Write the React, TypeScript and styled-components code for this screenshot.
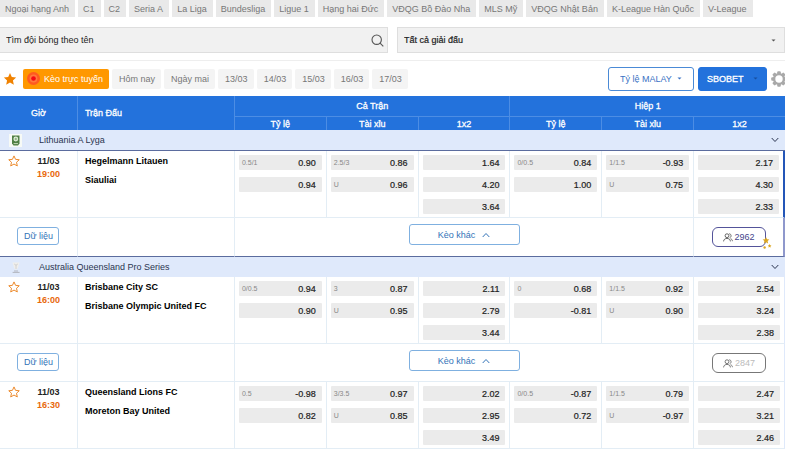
import React from "react";
import styled, { createGlobalStyle } from "styled-components";

const GlobalStyle = createGlobalStyle`
  *, *::before, *::after { box-sizing: border-box; }
  body {
    margin: 0;
    background: #fff;
    color: #222;
    font: 9px/12px "Liberation Sans", Arial, sans-serif;
  }
  button, input, select { font: inherit; color: inherit; margin: 0; }
  button, select { cursor: pointer; }
`;

const Page = styled.main`
  display: flex;
  flex-direction: column;
  overflow: hidden;
`;

const LeagueTabs = styled.nav`
  display: flex;
  gap: 3px;
  overflow: hidden;
`;

const LeagueTab = styled.button`
  flex: none;
  height: 17px;
  padding: 0 6px 0 5px;
  border: 0;
  background: #e9e9e9;
  color: #777;
`;

const SearchBar = styled.div`
  display: grid;
  grid-template-columns: 1fr 1fr;
  gap: 9px;
  padding: 10px 0 7px;
  border-bottom: 1px solid #eee;
`;

const Field = styled.label<{ $flush?: boolean }>`
  display: flex;
  align-items: center;
  height: 26px;
  padding: 0 ${(p) => (p.$flush ? "3px" : "8px")} 0 6px;
  background: #f1f1f1;
  border: 1px solid #dedede;
  border-left-width: ${(p) => (p.$flush ? 0 : "1px")};
  -webkit-text-stroke: ${(p) => (p.$flush ? 0 : "0.2px #222")};
`;

const SearchInput = styled.input`
  flex: 1;
  min-width: 0;
  padding: 0;
  border: 0;
  outline: 0;
  background: none;
  &::placeholder { color: #222; opacity: 1; }
`;

const BareSelect = styled.select`
  flex: 1;
  min-width: 0;
  padding: 0;
  border: 0;
  outline: 0;
  background: none;
  appearance: none;
`;

const FilterBar = styled.div`
  display: flex;
  align-items: center;
  gap: 3px;
  height: 35px;
  padding-left: 3px;
`;

const IconButton = styled.button`
  display: flex;
  flex: none;
  padding: 0;
  border: 0;
  background: none;
`;

const LiveButton = styled.button`
  display: flex;
  flex: none;
  align-items: center;
  gap: 4px;
  height: 20px;
  margin-left: 3px;
  padding: 0 6px 0 4px;
  border: 0;
  border-radius: 2px;
  background: #ff9800;
  color: #fff;
`;

const DayChip = styled.button`
  flex: none;
  height: 20px;
  padding: 0 6px 0 7px;
  border: 0;
  border-radius: 2px;
  background: #f4f4f4;
  color: #777;
`;

const FilterActions = styled.div`
  display: flex;
  flex: none;
  align-items: center;
  gap: 4px;
  margin: 0 -2px 0 auto;
`;

const PillSelect = styled.label<{ $solid?: boolean }>`
  display: flex;
  align-items: center;
  gap: ${(p) => (p.$solid ? "9px" : "5px")};
  height: 24px;
  padding: 0 ${(p) => (p.$solid ? "8px" : "11px")};
  border: 1px solid ${(p) => (p.$solid ? "#2372dc" : "#4a8ad6")};
  border-radius: 3px;
  background: ${(p) => (p.$solid ? "#2372dc" : "#fff")};
  color: ${(p) => (p.$solid ? "#fff" : "#3a72c4")};
  -webkit-text-stroke: ${(p) => (p.$solid ? "0.3px #fff" : 0)};
`;

const OddsTable = styled.table`
  width: 100%;
  table-layout: fixed;
  border-collapse: separate;
  border-spacing: 0;
`;

const TimeCol = styled.col`width: 9.8%;`;
const MatchCol = styled.col`width: 20%;`;

const Th = styled.th<{ $left?: boolean; $sub?: boolean }>`
  height: ${(p) => (p.$sub ? "13px" : "21px")};
  padding: ${(p) => (p.$left ? "0 7px" : "0")};
  border-left: 1px solid #4c8de4;
  border-bottom: ${(p) => (p.$sub ? 0 : "1px solid #4c8de4")};
  background: #2372dc;
  color: #fff;
  font-weight: 400;
  -webkit-text-stroke: 0.3px #fff;
  text-align: ${(p) => (p.$left ? "left" : "center")};
  &:first-child { border-left: ${(p) => (p.$sub ? "1px solid #4c8de4" : 0)}; }
  &[rowspan] { border-bottom: 0; }
`;

const LeagueCell = styled.td<{ $lined?: boolean }>`
  height: ${(p) => (p.$lined ? "21px" : "20px")};
  padding: 0 6px 0 9px;
  background: #dfe9fb;
  border-bottom: ${(p) => (p.$lined ? "1px solid #5b6c9e" : 0)};
`;

const LeagueLine = styled.div`
  display: flex;
  align-items: center;
  color: #2b3550;
  span { flex: 1; margin-left: 17px; }
`;

const Cell = styled.td<{ $edge?: string }>`
  height: 67px;
  padding: 4px 4px 3px;
  vertical-align: top;
  border-left: 1px solid #e3edf5;
  border-bottom: 1px solid #e3edf5;
  &:first-child { border-left: 0; }
  &:last-child { border-right: ${(p) => p.$edge ?? "1px solid #dfe9fb"}; }
`;

const FootCell = styled.td<{ $tight?: boolean; $active?: boolean }>`
  height: ${(p) => (p.$active ? "39px" : "38px")};
  padding: ${(p) => (p.$tight ? "6px" : "9px")} 0 0;
  vertical-align: top;
  text-align: center;
  border-left: 1px solid #e3edf5;
  border-bottom: 1px solid ${(p) => (p.$active ? "#5b6c9e" : "#e3edf5")};
  &:first-child { border-left: 0; }
  &:last-child { border-right: ${(p) => (p.$active ? "2px solid #8f98cc" : "1px solid #dfe9fb")}; }
`;

const Kickoff = styled.div`
  display: grid;
  grid-template-columns: 12px 1fr;
  gap: 4px;
  padding-left: 4px;
`;

const KickoffTimes = styled.div`
  text-align: center;
  font-weight: 700;
  line-height: 13px;
  time { display: block; }
  time + time { color: #e8690b; }
`;

const Teams = styled.div`
  padding-left: 3px;
  color: #000;
  font-weight: 700;
  line-height: 19px;
  margin-top: -3px;
`;

const OddsStack = styled.div`
  display: flex;
  flex-direction: column;
  gap: 7px;
`;

const Odd = styled.button`
  display: flex;
  align-items: center;
  justify-content: space-between;
  width: 100%;
  height: 15px;
  padding: 0 6px 0 3px;
  border: 0;
  border-radius: 1px;
  background: #ebebeb;
  color: #222;
  small { font-size: 7px; color: #888; }
  strong { margin-left: auto; font-weight: 400; -webkit-text-stroke: 0.2px #222; }
`;

const OutlineButton = styled.button<{ $wide?: boolean }>`
  display: inline-flex;
  align-items: center;
  justify-content: center;
  gap: 7px;
  width: ${(p) => (p.$wide ? "111px" : "42px")};
  height: ${(p) => (p.$wide ? "21px" : "18px")};
  padding: 0;
  border: 1px solid #7fb0e0;
  border-radius: 3px;
  background: #fff;
  color: #3474b8;
`;

const ViewersButton = styled.button<{ $muted?: boolean }>`
  position: relative;
  display: inline-flex;
  align-items: center;
  justify-content: center;
  gap: 2px;
  width: 54px;
  height: 20px;
  padding: 0;
  border: 1px solid ${(p) => (p.$muted ? "#777" : "#54549a")};
  border-radius: 6px;
  background: #fff;
  color: ${(p) => (p.$muted ? "#bbb" : "#45458c")};
`;

const Sparkle = styled.svg`
  position: absolute;
  right: -7px;
  bottom: -3px;
`;

const starPath = "M12 1.8l3.1 6.9 7.4.8-5.5 5 1.6 7.4L12 18.1l-6.6 3.8L7 14.5l-5.5-5 7.4-.8z";

const Star = ({ filled }: { filled?: boolean }) => (
  <svg width={filled ? 14 : 12} height={filled ? 14 : 12} viewBox="0 0 24 24" aria-hidden="true">
    <path d={starPath} fill={filled ? "#f08200" : "none"} stroke="#ec8a2c" strokeWidth={filled ? 0 : 2} strokeLinejoin="round" />
  </svg>
);

const Caret = ({ color = "#555" }: { color?: string }) => (
  <svg width="5" height="3" viewBox="0 0 5 3" aria-hidden="true">
    <path d="M0.5 0.5h4l-2 2z" fill={color} />
  </svg>
);

const Chevron = ({ up }: { up?: boolean }) => (
  <svg width="8" height="6" viewBox="0 0 8 6" fill="none" stroke={up ? "#3474b8" : "#2b3550"} aria-hidden="true">
    <path d={up ? "M0.7 5L4 1.5 7.3 5" : "M0.7 1L4 4.5 7.3 1"} />
  </svg>
);

const SearchIcon = () => (
  <svg width="13" height="13" viewBox="0 0 13 13" fill="none" stroke="#555" strokeWidth="1.1" aria-hidden="true">
    <circle cx="5.7" cy="5.7" r="4.7" />
    <path d="M9.1 9.1l3.2 3.2" />
  </svg>
);

const LiveIcon = () => (
  <svg width="13" height="13" viewBox="0 0 13 13" aria-hidden="true">
    <circle cx="6.5" cy="6.5" r="6.5" fill="#ff5a1f" />
    <circle cx="6.5" cy="6.5" r="3.9" fill="#ff7a3c" />
    <circle cx="6.5" cy="6.5" r="2.3" fill="#f50a14" />
  </svg>
);

const GearIcon = () => (
  <svg width="16" height="16" viewBox="0 0 16 16" aria-hidden="true">
    <g fill="#a9a9a9">
      {[0, 45, 90, 135].map((a) => (
        <rect key={a} x="6.2" y="0.2" width="3.6" height="15.6" rx="1" transform={`rotate(${a} 8 8)`} />
      ))}
      <circle cx="8" cy="8" r="6.1" />
    </g>
    <circle cx="8" cy="8" r="3.7" fill="#fff" />
  </svg>
);

const PeopleIcon = ({ muted }: { muted?: boolean }) => (
  <svg width="10" height="9" viewBox="0 0 10 9" fill="none" stroke={muted ? "#777" : "#666"} aria-hidden="true">
    <circle cx="4" cy="2.7" r="1.9" />
    <path d="M0.6 8.4c0-4 6.8-4 6.8 0M6.2 0.8c2.4 0 2.4 3.6 0.5 3.8M7.5 5.8c1.2.2 1.9 1.1 1.9 2.4" />
  </svg>
);

const LithuaniaBadge = () => (
  <svg width="13" height="13" viewBox="0 0 13 13" aria-hidden="true">
    <rect width="13" height="13" fill="#f7faf6" />
    <path d="M3 1.5h7.5v8L9 11.5H4.5L3 9.5z" fill="#4f7f45" />
    <circle cx="6.8" cy="5" r="2.4" fill="#e2eedb" />
    <path d="M5.5 5h2.6M6.8 3.7v2.6" stroke="#6b9b5c" strokeWidth="0.7" />
    <path d="M4.6 9.6h4.4" stroke="#c4d8b8" />
  </svg>
);

const AustraliaBadge = () => (
  <svg width="13" height="13" viewBox="0 0 13 13" aria-hidden="true">
    <path d="M3.5 1.5h7L9 6.5 8 8.5H6L5 6.5z" fill="#f0efec" />
    <path d="M5.2 3l1.8 1.2L8.8 3M7 4v4" stroke="#c9c9cc" strokeWidth="0.8" fill="none" />
    <path d="M3.6 11.4h7M5 10h4" stroke="#b2b6bf" />
  </svg>
);

type Line = [string, string];
type Match = {
  time: string;
  home: string;
  away: string;
  odds: Line[][];
  viewers?: string;
  active?: boolean;
};

const leagues = ["Ngoại hạng Anh", "C1", "C2", "Seria A", "La Liga", "Bundesliga", "Ligue 1", "Hạng hai Đức", "VĐQG Bồ Đào Nha", "MLS Mỹ", "VĐQG Nhật Bản", "K-League Hàn Quốc", "V-League"];
const days = ["Hôm nay", "Ngày mai", "13/03", "14/03", "15/03", "16/03", "17/03"];

const groups: { name: string; badge: React.ReactNode; lined?: boolean; matches: Match[] }[] = [
  {
    name: "Lithuania A Lyga",
    badge: <LithuaniaBadge />,
    lined: true,
    matches: [
      {
        time: "19:00", home: "Hegelmann Litauen", away: "Siauliai", viewers: "2962", active: true,
        odds: [
          [["0.5/1", "0.90"], ["", "0.94"]],
          [["2.5/3", "0.86"], ["U", "0.96"]],
          [["", "1.64"], ["", "4.20"], ["", "3.64"]],
          [["0/0.5", "0.84"], ["", "1.00"]],
          [["1/1.5", "-0.93"], ["U", "0.75"]],
          [["", "2.17"], ["", "4.30"], ["", "2.33"]],
        ],
      },
    ],
  },
  {
    name: "Australia Queensland Pro Series",
    badge: <AustraliaBadge />,
    matches: [
      {
        time: "16:00", home: "Brisbane City SC", away: "Brisbane Olympic United FC", viewers: "2847",
        odds: [
          [["0/0.5", "0.94"], ["", "0.90"]],
          [["3", "0.87"], ["U", "0.95"]],
          [["", "2.11"], ["", "2.79"], ["", "3.44"]],
          [["0", "0.68"], ["", "-0.81"]],
          [["1/1.5", "0.92"], ["U", "0.90"]],
          [["", "2.54"], ["", "3.24"], ["", "2.38"]],
        ],
      },
      {
        time: "16:30", home: "Queensland Lions FC", away: "Moreton Bay United",
        odds: [
          [["0.5", "-0.98"], ["", "0.82"]],
          [["3/3.5", "0.97"], ["U", "0.85"]],
          [["", "2.02"], ["", "2.95"], ["", "3.49"]],
          [["0/0.5", "-0.87"], ["", "0.72"]],
          [["1/1.5", "0.79"], ["U", "-0.97"]],
          [["", "2.47"], ["", "3.21"], ["", "2.46"]],
        ],
      },
    ],
  },
];

const MatchRows = ({ match }: { match: Match }) => {
  const edge = match.active ? "2px solid #2456b8" : undefined;
  return (
    <>
      <tr>
        <Cell>
          <Kickoff>
            <IconButton aria-label={`Yêu thích ${match.home}`}><Star /></IconButton>
            <KickoffTimes><time>11/03</time><time>{match.time}</time></KickoffTimes>
          </Kickoff>
        </Cell>
        <Cell>
          <Teams><div>{match.home}</div><div>{match.away}</div></Teams>
        </Cell>
        {match.odds.map((lines, i) => (
          <Cell key={i} $edge={edge}>
            <OddsStack>
              {lines.map(([label, value], j) => (
                <Odd key={j}>{label && <small>{label}</small>}<strong>{value}</strong></Odd>
              ))}
            </OddsStack>
          </Cell>
        ))}
      </tr>
      {match.viewers && (
        <tr>
          <FootCell $active={match.active}><OutlineButton>Dữ liệu</OutlineButton></FootCell>
          <FootCell $active={match.active} />
          <FootCell $active={match.active} $tight colSpan={5}>
            <OutlineButton $wide>Kèo khác <Chevron up /></OutlineButton>
          </FootCell>
          <FootCell $active={match.active}>
            <ViewersButton $muted={!match.active}>
              <PeopleIcon muted={!match.active} />
              {match.viewers}
              {match.active && (
                <Sparkle width="12" height="12" viewBox="0 0 12 12" fill="#dba520" aria-hidden="true">
                  <path d="M6 0l1 2.2 2.4.3-1.8 1.6.5 2.4L6 5.3 3.9 6.5l.5-2.4L2.6 2.5 5 2.2z" />
                  <path d="M9.6 7l.6 1.2 1.3.2-1 .9.3 1.3-1.2-.6-1.2.6.3-1.3-1-.9 1.3-.2z" />
                  <circle cx="4.6" cy="10.5" r="1.2" />
                </Sparkle>
              )}
            </ViewersButton>
          </FootCell>
        </tr>
      )}
    </>
  );
};

export default function App() {
  return (
    <>
      <GlobalStyle />
      <Page>
        <LeagueTabs>
          {leagues.map((l) => <LeagueTab key={l}>{l}</LeagueTab>)}
        </LeagueTabs>
        <SearchBar>
          <Field $flush>
            <SearchInput type="text" aria-label="Tìm đội bóng theo tên" placeholder="Tìm đội bóng theo tên" />
            <IconButton aria-label="Tìm"><SearchIcon /></IconButton>
          </Field>
          <Field>
            <BareSelect aria-label="Giải đấu"><option>Tất cả giải đấu</option></BareSelect>
            <Caret />
          </Field>
        </SearchBar>
        <FilterBar>
          <IconButton aria-label="Yêu thích"><Star filled /></IconButton>
          <LiveButton><LiveIcon />Kèo trực tuyến</LiveButton>
          {days.map((d) => <DayChip key={d}>{d}</DayChip>)}
          <FilterActions>
            <PillSelect>
              <BareSelect aria-label="Loại tỷ lệ"><option>Tỷ lệ MALAY</option></BareSelect>
              <Caret color="#3a72c4" />
            </PillSelect>
            <PillSelect $solid>
              <BareSelect aria-label="Nhà cái"><option>SBOBET</option></BareSelect>
              <Caret color="#174f9f" />
            </PillSelect>
            <IconButton aria-label="Cài đặt"><GearIcon /></IconButton>
          </FilterActions>
        </FilterBar>
        <OddsTable>
          <colgroup>
            <TimeCol /><MatchCol /><col /><col /><col /><col /><col /><col />
          </colgroup>
          <thead>
            <tr>
              <Th rowSpan={2}>Giờ</Th>
              <Th rowSpan={2} $left>Trận Đấu</Th>
              <Th colSpan={3}>Cả Trận</Th>
              <Th colSpan={3}>Hiệp 1</Th>
            </tr>
            <tr>
              {["Tỷ lệ", "Tài xỉu", "1x2", "Tỷ lệ", "Tài xỉu", "1x2"].map((t, i) => <Th key={i} $sub>{t}</Th>)}
            </tr>
          </thead>
          {groups.map((g) => (
            <tbody key={g.name}>
              <tr>
                <LeagueCell colSpan={8} $lined={g.lined}>
                  <LeagueLine>
                    {g.badge}
                    <span>{g.name}</span>
                    <IconButton aria-label={`Thu gọn ${g.name}`}><Chevron /></IconButton>
                  </LeagueLine>
                </LeagueCell>
              </tr>
              {g.matches.map((m) => <MatchRows key={m.home} match={m} />)}
            </tbody>
          ))}
        </OddsTable>
      </Page>
    </>
  );
}
